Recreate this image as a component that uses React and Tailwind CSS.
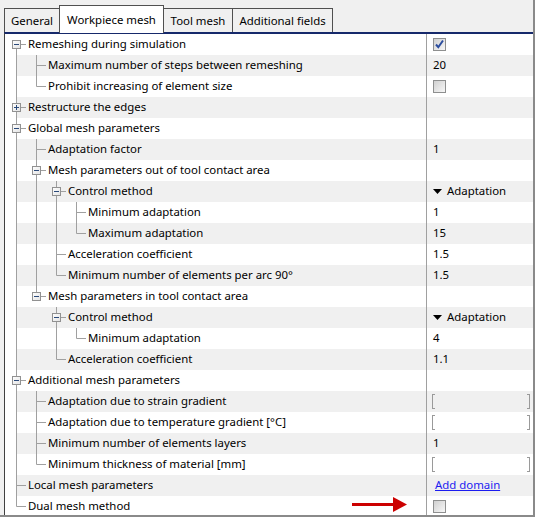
import React from "react";

const rows = [
  { level: 0, label: "Remeshing during simulation", exp: "-", v: { t: "check", on: true } },
  { level: 1, label: "Maximum number of steps between remeshing", v: { t: "text", s: "20" } },
  { level: 1, label: "Prohibit increasing of element size", v: { t: "check", on: false } },
  { level: 0, label: "Restructure the edges", exp: "+" },
  { level: 0, label: "Global mesh parameters", exp: "-" },
  { level: 1, label: "Adaptation factor", v: { t: "text", s: "1" } },
  { level: 1, label: "Mesh parameters out of tool contact area", exp: "-" },
  { level: 2, label: "Control method", exp: "-", v: { t: "drop", s: "Adaptation" } },
  { level: 3, label: "Minimum adaptation", v: { t: "text", s: "1" } },
  { level: 3, label: "Maximum adaptation", v: { t: "text", s: "15" } },
  { level: 2, label: "Acceleration coefficient", v: { t: "text", s: "1.5" } },
  { level: 2, label: "Minimum number of elements per arc 90°", v: { t: "text", s: "1.5" } },
  { level: 1, label: "Mesh parameters in tool contact area", exp: "-" },
  { level: 2, label: "Control method", exp: "-", v: { t: "drop", s: "Adaptation" } },
  { level: 3, label: "Minimum adaptation", v: { t: "text", s: "4" } },
  { level: 2, label: "Acceleration coefficient", v: { t: "text", s: "1.1" } },
  { level: 0, label: "Additional mesh parameters", exp: "-" },
  { level: 1, label: "Adaptation due to strain gradient", v: { t: "field" } },
  { level: 1, label: "Adaptation due to temperature gradient [°C]", v: { t: "field" } },
  { level: 1, label: "Minimum number of elements layers", v: { t: "text", s: "1" } },
  { level: 1, label: "Minimum thickness of material [mm]", v: { t: "field" } },
  { level: 0, label: "Local mesh parameters", v: { t: "link", s: "Add domain" } },
  { level: 0, label: "Dual mesh method", v: { t: "check", on: false } },
];

// does row i have a later sibling at its own level?
function hasNext(i) {
  const L = rows[i].level;
  for (let j = i + 1; j < rows.length; j++) {
    if (rows[j].level < L) return false;
    if (rows[j].level === L) return true;
  }
  return false;
}

// for row i, the ancestor index at level l
function ancestorAt(i, l) {
  for (let j = i; j >= 0; j--) if (rows[j].level === l) return j;
  return -1;
}

const LINE = "#a0a0a0";

function Gutter({ i }) {
  const r = rows[i];
  const L = r.level;
  const w = 20 * L + 12;
  const els = [];
  for (let l = 0; l < L; l++) {
    if (hasNext(ancestorAt(i, l))) {
      els.push(<line key={"a" + l} x1={20 * l + 0.5} y1={0} x2={20 * l + 0.5} y2={21} stroke={LINE} />);
    }
  }
  const x = 20 * L + 0.5;
  const top = i === 0 ? 10.5 : 0;
  const bot = hasNext(i) ? 21 : 10.5;
  els.push(<line key="v" x1={x} y1={top} x2={x} y2={bot} stroke={LINE} />);
  els.push(<line key="h" x1={x} y1={10.5} x2={20 * L + 10} y2={10.5} stroke={LINE} />);
  if (r.exp) {
    els.push(
      <g key="b">
        <rect x={20 * L - 3.5} y={6.5} width={8} height={8} fill="url(#boxg)" stroke="#919191" />
        <line x1={20 * L - 2} y1={10.5} x2={20 * L + 3} y2={10.5} stroke="#2b4a7a" />
        {r.exp === "+" && <line x1={x} y1={8} x2={x} y2={13} stroke="#2b4a7a" />}
      </g>
    );
  }
  return (
    <svg width={w} height={21} className="shrink-0 overflow-visible block">
      <defs>
        <linearGradient id="boxg" x1="0" y1="0" x2="1" y2="1">
          <stop offset="0" stopColor="#ffffff" />
          <stop offset="1" stopColor="#e2e2e2" />
        </linearGradient>
      </defs>
      {els}
    </svg>
  );
}

function Check({ on }) {
  return (
    <div className="w-[13px] h-[13px] border border-[#8e8f8f] bg-[linear-gradient(135deg,#d0d0d0,#f7f7f7)] relative">
      {on && (
        <svg width="11" height="11" viewBox="0 0 11 11" className="absolute left-0 top-0">
          <path d="M2 5.5 L4.3 8.2 L9 1.5" fill="none" stroke="#2c4d9e" strokeWidth="2" />
        </svg>
      )}
    </div>
  );
}

function Field() {
  return (
    <div className="flex justify-between w-[98px] h-[15px] ml-[-1px]">
      <div className="w-[3px] h-full border-l border-t border-b border-[#9a9a9a]" />
      <div className="w-[3px] h-full border-r border-t border-b border-[#9a9a9a]" />
    </div>
  );
}

function Value({ v }) {
  if (!v) return null;
  if (v.t === "check") return <Check on={v.on} />;
  if (v.t === "text") return <span className="pb-px">{v.s}</span>;
  if (v.t === "field") return <Field />;
  if (v.t === "drop")
    return (
      <div className="flex items-center gap-[5px]">
        <svg width="9" height="5" viewBox="0 0 9 5" className="block">
          <path d="M0 0 H9 L4.5 5 Z" fill="#000" />
        </svg>
        <span className="pb-px">{v.s}</span>
      </div>
    );
  if (v.t === "link")
    return <span className="text-[#1c1cf0] underline ml-[2px] pb-px">{v.s}</span>;
  return null;
}

function Tab({ label, active, w }) {
  return (
    <div
      className={
        "flex items-center justify-center border border-b-0 border-[#505050] -ml-px first:ml-0 " +
        (active ? "h-[28px] bg-white relative z-10 -mb-px" : "h-[24px] bg-[#f0f0f0]")
      }
      style={{ width: w }}
    >
      <span>{label}</span>
    </div>
  );
}

export default function App() {
  return (
    <div
      className="w-[535px] h-[517px] bg-[#f0f0f0] overflow-hidden relative border-r-2 border-b-2 border-[#8a8a8a] text-[11.4px] text-black leading-none"
      style={{ fontFamily: '"Noto Sans", "DejaVu Sans", sans-serif' }}
    >
      <div className="flex items-end h-[32px] pl-[4px]">
        <Tab label="General" w={56} />
        <Tab label="Workpiece mesh" w={105} active />
        <Tab label="Tool mesh" w={70} />
        <Tab label="Additional fields" w={101} />
      </div>
      <div className="ml-[4px] border-l border-[#404040] border-t-2 border-t-[#16296b] bg-white h-[485px] flex">
        <div className="flex flex-col w-[421px]">
          {rows.map((r, i) => (
            <div key={i} className="flex h-[21px] shrink-0">
              <div className="w-[11px] shrink-0 bg-white" />
              <div className={"flex-1 flex items-center " + (i % 2 ? "bg-[#f0f0f0]" : "bg-white")}>
                <Gutter i={i} />
                <span className="whitespace-nowrap pb-px">{r.label}</span>
              </div>
            </div>
          ))}
        </div>
        <div className="w-px bg-[#a0a0a0] shrink-0" />
        <div className="flex flex-col flex-1">
          {rows.map((r, i) => (
            <div
              key={i}
              className={"flex items-center h-[21px] shrink-0 pl-[6px] " + (i % 2 ? "bg-[#f0f0f0]" : "bg-white")}
            >
              <Value v={r.v} />
            </div>
          ))}
        </div>
      </div>
      <svg width="56" height="16" viewBox="0 0 56 16" className="absolute left-[352px] top-[497px]">
        <rect x="0" y="6" width="42" height="3" fill="#cc0000" />
        <path d="M41 0 L55 7.5 L41 15 Z" fill="#cc0000" />
      </svg>
    </div>
  );
}
